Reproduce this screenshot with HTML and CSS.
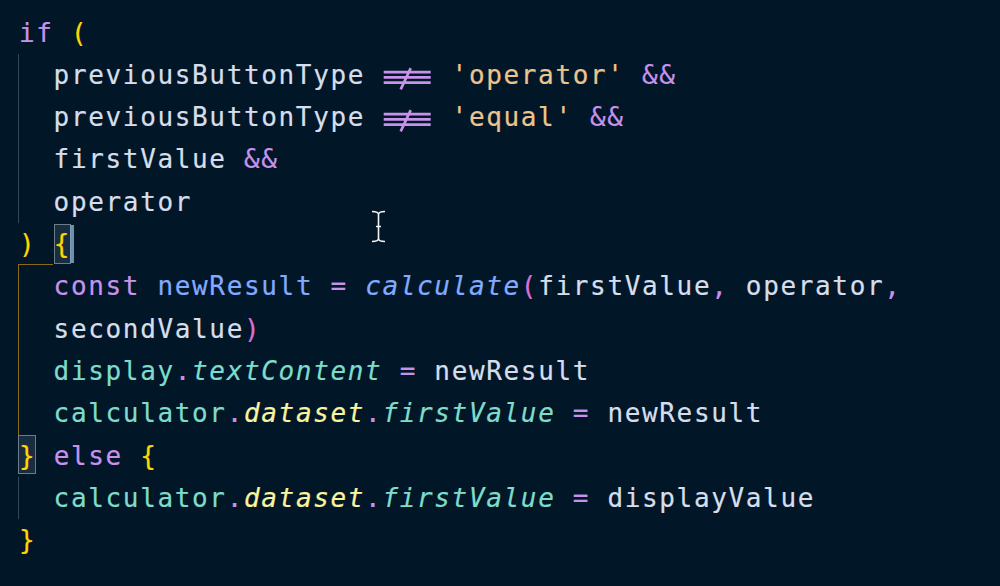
FILE: index.html
```html
<!DOCTYPE html>
<html lang="en">
<head>
<meta charset="utf-8">
<title>Code</title>
<link rel="stylesheet" href="styles.css">
</head>
<body>
<div class="editor">
<div class="ln"><span class="k">if</span> <span class="b">(</span></div>
<div class="ln guide">  <span class="v">previousButtonType</span> <span class="neq"><svg viewBox="0 0 52 42" width="52" height="42"><path d="M1.7 18.2H48.7M1.7 23.4H48.7M1.7 28.6H48.7M28.7 14.1L18.7 35.4"/></svg></span> <span class="s">'operator'</span> <span class="o">&amp;&amp;</span></div>
<div class="ln guide">  <span class="v">previousButtonType</span> <span class="neq"><svg viewBox="0 0 52 42" width="52" height="42"><path d="M1.7 18.2H48.7M1.7 23.4H48.7M1.7 28.6H48.7M28.7 14.1L18.7 35.4"/></svg></span> <span class="s">'equal'</span> <span class="o">&amp;&amp;</span></div>
<div class="ln guide">  <span class="v">firstValue</span> <span class="o">&amp;&amp;</span></div>
<div class="ln guide">  <span class="v">operator</span></div>
<div class="ln open"><span class="b">)</span> <span class="match cur b">{</span></div>
<div class="ln active">  <span class="k">const</span> <span class="n">newResult</span> <span class="o">=</span> <span class="f">calculate</span><span class="p">(</span><span class="v">firstValue</span><span class="o">,</span> <span class="v">operator</span><span class="o">,</span></div>
<div class="ln active">  <span class="v">secondValue</span><span class="p">)</span></div>
<div class="ln active">  <span class="t">display</span><span class="o">.</span><span class="ti">textContent</span> <span class="o">=</span> <span class="v">newResult</span></div>
<div class="ln active">  <span class="t">calculator</span><span class="o">.</span><span class="y">dataset</span><span class="o">.</span><span class="ti">firstValue</span> <span class="o">=</span> <span class="v">newResult</span></div>
<div class="ln"><span class="match close b">}</span> <span class="k">else</span> <span class="b">{</span></div>
<div class="ln guide">  <span class="t">calculator</span><span class="o">.</span><span class="y">dataset</span><span class="o">.</span><span class="ti">firstValue</span> <span class="o">=</span> <span class="v">displayValue</span></div>
<div class="ln"><span class="b">}</span></div>
<svg class="ibeam" viewBox="0 0 15 33" width="15" height="33"><path d="M1 1.5C4 1.5 7.5 2 7.5 4.5C7.5 2 11 1.5 14 1.5M7.5 4.5V28.5M5 16.5H10M1 31.5C4 31.5 7.5 31 7.5 28.5C7.5 31 11 31.5 14 31.5"/></svg>
</div>
</body>
</html>
```
FILE: styles.css
```css
html, body {
  margin: 0;
  padding: 0;
  background: #011627;
  width: 1000px;
  height: 586px;
  overflow: hidden;
}

.editor {
  position: relative;
  padding: 11.5px 0 0 19px;
  font-family: "DejaVu Sans Mono", "Liberation Mono", monospace;
  font-size: 26px;
  letter-spacing: 1.65px;
  line-height: 42.33px;
  color: #d6deeb;
  -webkit-text-stroke: 0.2px currentColor;
}

.ln {
  position: relative;
  height: 42.33px;
  white-space: pre;
}

.guide::before,
.active::before {
  content: "";
  position: absolute;
  left: -1px;
  top: 0;
  bottom: 0;
  border-left: 1px solid #34465a;
}

.active::before {
  border-left: 1.5px solid #8a6a1a;
}

.open::after {
  content: "";
  position: absolute;
  left: -1px;
  width: 35px;
  bottom: 0;
  border-bottom: 1.5px solid #8a6a1a;
}

.k { color: #c792ea; }
.b { color: #ffd700; }
.v { color: #d6deeb; }
.s { color: #ecc48d; }
.o { color: #c792ea; }
.n { color: #82aaff; }
.f { color: #82aaff; font-style: italic; }
.p { color: #da70d6; }
.t { color: #7fdbca; }
.ti { color: #7fdbca; font-style: italic; }
.y { color: #faf39f; font-style: italic; }

.neq {
  display: inline-block;
  width: 51.9px;
  height: 42.33px;
  vertical-align: top;
  letter-spacing: 0;
}

.neq svg {
  display: block;
  fill: none;
  stroke: #c792ea;
  stroke-width: 2.7;
}

.match {
  position: relative;
  display: inline-block;
  height: 40px;
  margin-top: 1px;
  vertical-align: top;
  line-height: 40px;
  background: #1a2d3f;
  outline: 1px solid #6b7c8c;
  outline-offset: -1px;
}

.close {
  margin-left: -1px;
  padding-left: 1px;
  border-top: 1.5px solid #8a6a1a;
  height: 38.5px;
  margin-top: 0;
}

.cur::after {
  content: "";
  position: absolute;
  top: 1px;
  bottom: 1px;
  right: -3px;
  width: 4px;
  background: #80a4c2;
  opacity: 0.85;
}

.ibeam {
  position: absolute;
  left: 371px;
  top: 210px;
  fill: none;
  stroke: #f4f4f4;
  stroke-width: 1.6;
}
```
